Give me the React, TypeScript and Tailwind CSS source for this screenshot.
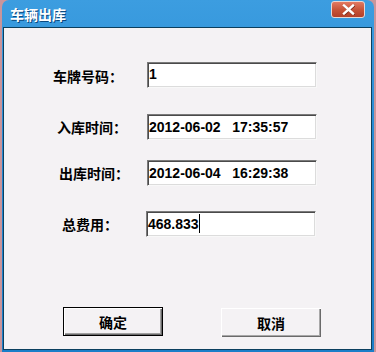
import React from "react";

const cjk = { fontFamily: '"Noto Sans CJK SC", "Noto Sans", sans-serif' };
const num = { fontFamily: '"Liberation Sans", Arial, sans-serif' };

function Field({ value, caret, className }: { value: string; caret?: boolean; className?: string }) {
  return (
    <div
      className={
        "w-[170px] h-[26px] bg-white border border-t-[#7a7a7a] border-l-[#7a7a7a] border-b-[#f8f8f8] border-r-[#f8f8f8] shadow-[inset_1px_1px_#4a4a4a,inset_-1px_-1px_#dcdcdc] flex items-center pl-[1px] pb-[1px] " +
        (className ?? "")
      }
    >
      <span className="text-[14px] font-bold text-black leading-none whitespace-pre" style={num}>
        {value}
      </span>
      {caret && <span className="w-px h-[19px] bg-black" />}
    </div>
  );
}

function Row({
  label,
  labelPad,
  value,
  caret,
  mt,
  fieldShift,
  labelShift,
}: {
  label: string;
  labelPad: string;
  value: string;
  caret?: boolean;
  mt: string;
  fieldShift?: string;
  labelShift?: string;
}) {
  return (
    <div className={"flex items-center " + mt}>
      <div className={"w-[143px] " + labelPad + " " + (labelShift ?? "")}>
        <span className="text-[14px] font-bold text-black leading-none" style={cjk}>
          {label}
        </span>
      </div>
      <Field value={value} caret={caret} className={fieldShift} />
    </div>
  );
}

export default function App() {
  return (
    <div className="w-[376px] h-[352px] bg-[#c9959b] pl-[2px] pr-[2px] flex">
      <div className="flex-1 flex flex-col rounded-t-[7px] bg-gradient-to-b from-[#3c9de0] via-[#1f86d0] to-[#1a7ec8] pl-[1px] pr-[2px] pb-[2px] overflow-hidden">
        <div className="h-[27px] flex items-start pl-[7px] pr-[7px]">
          <span className="mt-[6px] text-[14px] font-bold text-white leading-[16px] [text-shadow:1px_1px_0_#0b4a80]" style={cjk}>
            车辆出库
          </span>
          <div className="ml-auto mt-[1px] w-[34px] h-[17px] rounded-[3px] border border-[#e8d8d4] bg-gradient-to-b from-[#e27a62] via-[#c85438] to-[#b2402a] flex items-center justify-center">
            <svg width="13" height="11" viewBox="0 0 13 11">
              <path d="M2 1.5 L11 9.5 M11 1.5 L2 9.5" stroke="#7a2a1a" strokeWidth="2.6" strokeLinecap="square" transform="translate(0.6,0.6)" />
              <path d="M2 1.5 L11 9.5 M11 1.5 L2 9.5" stroke="#ffffff" strokeWidth="2.4" strokeLinecap="square" />
            </svg>
          </div>
        </div>
        <div className="flex-1 bg-[#f4f2f4] border border-[#0b3f5e] flex flex-col">
          <Row label="车牌号码：" labelPad="pl-[49px]" value="1" mt="mt-[33px]" labelShift="pt-[3px]" />
          <Row label="入库时间：" labelPad="pl-[53px]" value="2012-06-02   17:35:57" mt="mt-[26px]" />
          <Row label="出库时间：" labelPad="pl-[55px]" value="2012-06-04   16:29:38" mt="mt-[20px]" />
          <Row label="总费用：" labelPad="pl-[58px]" value="468.833" caret mt="mt-[25px]" fieldShift="-ml-[1px]" />
          <div className="flex mt-[70px] pl-[59px] gap-[58px]">
            <button
              className="w-[100px] h-[29px] bg-[#f4f2f4] border border-black shadow-[inset_1px_1px_#ffffff,inset_-1px_-1px_#6a6a6a,inset_-2px_-2px_#a0a0a0] flex items-center justify-center"
              style={cjk}
            >
              <span className="text-[14px] font-bold text-black leading-none">确定</span>
            </button>
            <button
              className="w-[100px] h-[29px] mt-[1px] bg-[#f4f2f4] shadow-[inset_1px_1px_#ffffff,inset_-1px_-1px_#6a6a6a,inset_-2px_-2px_#a8a8a8] flex items-center justify-center"
              style={cjk}
            >
              <span className="text-[14px] font-bold text-black leading-none">取消</span>
            </button>
          </div>
        </div>
      </div>
    </div>
  );
}
